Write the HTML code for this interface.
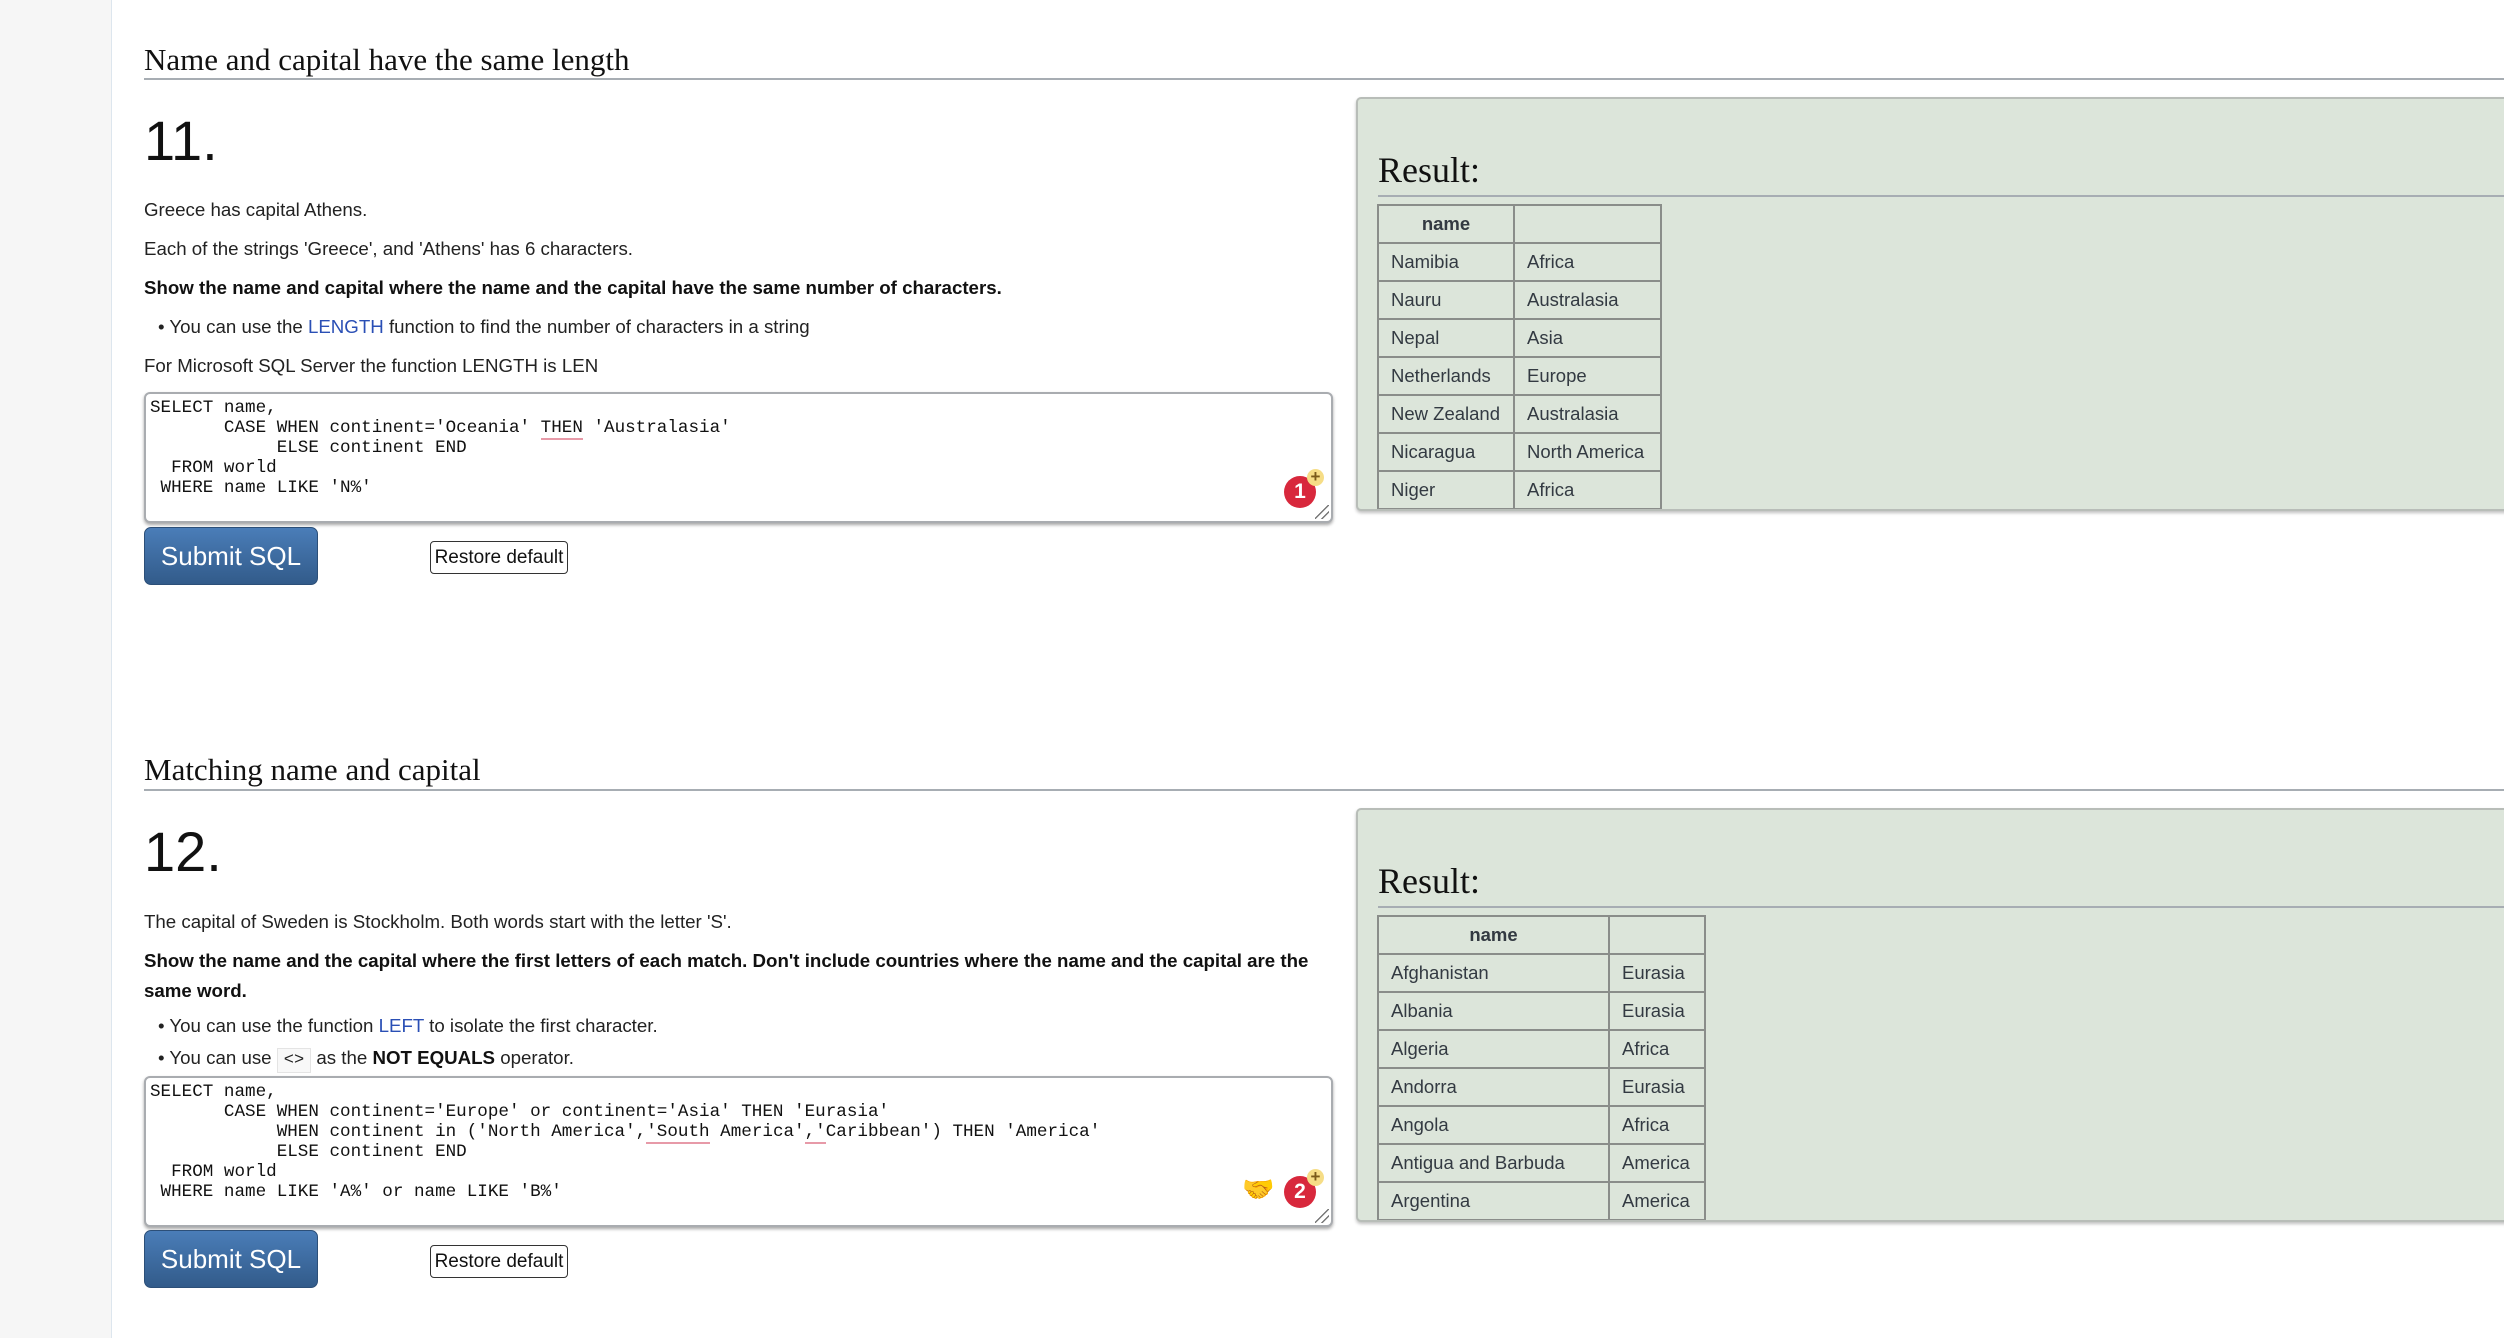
<!DOCTYPE html>
<html><head><meta charset="utf-8"><style>
*{margin:0;padding:0;box-sizing:border-box}
body{width:2504px;height:1338px;position:relative;background:#fff;font-family:"Liberation Sans",Arial,sans-serif;color:#222;overflow:hidden}
.side{position:absolute;left:0;top:0;width:112px;height:1338px;background:#f6f6f6;border-right:1px solid #dde6ee}
h2{position:absolute;left:144px;font-family:"Liberation Serif",serif;font-weight:normal;font-size:31px;color:#111}
.hr{position:absolute;left:144px;right:0;height:2px;background:#a7adb3}
.num{position:absolute;left:144px;font-size:56px;color:#111}
.p{position:absolute;left:144px;font-size:18.7px;white-space:nowrap;color:#222}
.p b{color:#111}
.p a{color:#2a4fb5;text-decoration:none}
.ta{position:absolute;left:144px;width:1189px;border:2px solid #a9acb0;border-radius:6px;background:#fff;box-shadow:0 2px 3px rgba(0,0,0,.35)}
.code{position:absolute;left:4px;top:4px;font-family:"Liberation Mono",monospace;font-size:17.6px;line-height:20px;white-space:pre;color:#111}
.u{border-bottom:2px solid #e79aa8}
.btn{position:absolute;left:144px;width:174px;height:58px;border-radius:7px;background:linear-gradient(#4a7db8,#325b8a);border:1px solid #2c4f78;color:#fff;font-size:26px;text-align:center;line-height:56px}
.rst{position:absolute;left:430px;width:138px;height:33px;border:1px solid #333;border-radius:4px;background:#fff;font-size:19px;text-align:center;line-height:31px;color:#111}
.panel{position:absolute;left:1356px;width:1160px;background:#dce5da;border:2px solid #b8bdb8;border-radius:5px;box-shadow:0 2px 3px rgba(0,0,0,.25);overflow:hidden}
.res{position:absolute;left:20px;font-family:"Liberation Serif",serif;font-size:36px;color:#111}
.rhr{position:absolute;left:20px;right:0;height:2px;background:#a7adb3}
table{position:absolute;left:19px;border-collapse:collapse;font-size:18.5px;color:#333a42}
td,th{border:2px solid #8a8d8a;height:38px;padding:0 12px;text-align:left;font-weight:normal;white-space:nowrap}
th{font-weight:bold;text-align:center}
.badge{position:absolute;width:32px;height:32px;border-radius:50%;background:#d8283c;color:#fff;font-weight:bold;font-size:21px;text-align:center;line-height:32px}
.plus{position:absolute;width:17px;height:17px;border-radius:50%;background:#f6dd86;color:#7a5a1a;font-size:17px;text-align:center;line-height:16px;font-weight:bold}
.grip{position:absolute;right:2px;bottom:2px;width:14px;height:14px;background:linear-gradient(135deg,transparent 45%,#777 45%,#777 52%,transparent 52%,transparent 70%,#777 70%,#777 77%,transparent 77%)}
code{border:1px solid #e4e4e4;background:#f8f8f8;padding:2px 6px;font-family:"Liberation Mono",monospace;font-size:17px}
</style></head><body>
<div class="side"></div>

<h2 style="top:42px">Name and capital have the same length</h2>
<div class="hr" style="top:78px"></div>
<div class="num" style="top:108px">11.</div>
<div class="p" style="top:199px">Greece has capital Athens.</div>
<div class="p" style="top:238px">Each of the strings 'Greece', and 'Athens' has 6 characters.</div>
<div class="p" style="top:277px"><b>Show the name and capital where the name and the capital have the same number of characters.</b></div>
<div class="p" style="top:316px;left:158px">• You can use the <a>LENGTH</a> function to find the number of characters in a string</div>
<div class="p" style="top:355px">For Microsoft SQL Server the function LENGTH is LEN</div>
<div class="ta" style="top:392px;height:131px">
<div class="code">SELECT name,
       CASE WHEN continent='Oceania' <span class="u">THEN</span> 'Australasia'
            ELSE continent END
  FROM world
 WHERE name LIKE 'N%'</div>
<div class="badge" style="left:1138px;top:82px">1</div>
<div class="plus" style="left:1161px;top:75px">+</div>
<div class="grip"></div>
</div>
<div class="btn" style="top:527px">Submit SQL</div>
<div class="rst" style="top:541px">Restore default</div>

<div class="panel" style="top:97px;height:414px">
<div class="res" style="top:50px">Result:</div>
<div class="rhr" style="top:96px"></div>
<table style="top:105px">
<tr><th style="width:136px">name</th><th style="width:147px"></th></tr>
<tr><td>Namibia</td><td>Africa</td></tr>
<tr><td>Nauru</td><td>Australasia</td></tr>
<tr><td>Nepal</td><td>Asia</td></tr>
<tr><td>Netherlands</td><td>Europe</td></tr>
<tr><td>New Zealand</td><td>Australasia</td></tr>
<tr><td>Nicaragua</td><td>North America</td></tr>
<tr><td>Niger</td><td>Africa</td></tr>
</table>
</div>

<h2 style="top:752px">Matching name and capital</h2>
<div class="hr" style="top:789px"></div>
<div class="num" style="top:819px">12.</div>
<div class="p" style="top:911px">The capital of Sweden is Stockholm. Both words start with the letter 'S'.</div>
<div class="p" style="top:950px"><b>Show the name and the capital where the first letters of each match. Don't include countries where the name and the capital are the</b></div>
<div class="p" style="top:980px"><b>same word.</b></div>
<div class="p" style="top:1015px;left:158px">• You can use the function <a>LEFT</a> to isolate the first character.</div>
<div class="p" style="top:1047px;left:158px">• You can use <code>&lt;&gt;</code> as the <b>NOT EQUALS</b> operator.</div>
<div class="ta" style="top:1076px;height:151px">
<div class="code">SELECT name,
       CASE WHEN continent='Europe' or continent='Asia' THEN 'Eurasia'
            WHEN continent in ('North America',<span class="u">'South</span> America'<span class="u">,'</span>Caribbean') THEN 'America'
            ELSE continent END
  FROM world
 WHERE name LIKE 'A%' or name LIKE 'B%'</div>
<div style="position:absolute;left:1096px;top:96px;font-size:26px;color:#f0b840">🤝</div>
<div class="badge" style="left:1138px;top:98px">2</div>
<div class="plus" style="left:1161px;top:91px">+</div>
<div class="grip"></div>
</div>
<div class="btn" style="top:1230px">Submit SQL</div>
<div class="rst" style="top:1245px">Restore default</div>

<div class="panel" style="top:808px;height:414px">
<div class="res" style="top:50px">Result:</div>
<div class="rhr" style="top:96px"></div>
<table style="top:105px">
<tr><th style="width:231px">name</th><th style="width:96px"></th></tr>
<tr><td>Afghanistan</td><td>Eurasia</td></tr>
<tr><td>Albania</td><td>Eurasia</td></tr>
<tr><td>Algeria</td><td>Africa</td></tr>
<tr><td>Andorra</td><td>Eurasia</td></tr>
<tr><td>Angola</td><td>Africa</td></tr>
<tr><td>Antigua and Barbuda</td><td>America</td></tr>
<tr><td>Argentina</td><td>America</td></tr>
</table>
</div>
</body></html>
